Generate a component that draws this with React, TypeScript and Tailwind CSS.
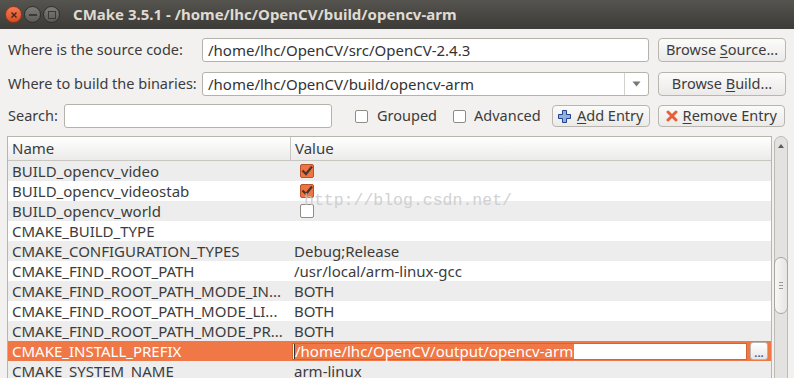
import React from 'react';

const font = { fontFamily: '"Noto Sans", "Open Sans", sans-serif' };

type Row = { name: string; value?: string; check?: boolean | null; selected?: boolean };

const rows: Row[] = [
  { name: 'BUILD_opencv_video', check: true },
  { name: 'BUILD_opencv_videostab', check: true },
  { name: 'BUILD_opencv_world', check: false },
  { name: 'CMAKE_BUILD_TYPE', value: '' },
  { name: 'CMAKE_CONFIGURATION_TYPES', value: 'Debug;Release' },
  { name: 'CMAKE_FIND_ROOT_PATH', value: '/usr/local/arm-linux-gcc' },
  { name: 'CMAKE_FIND_ROOT_PATH_MODE_IN...', value: 'BOTH' },
  { name: 'CMAKE_FIND_ROOT_PATH_MODE_LI...', value: 'BOTH' },
  { name: 'CMAKE_FIND_ROOT_PATH_MODE_PR...', value: 'BOTH' },
  { name: 'CMAKE_INSTALL_PREFIX', selected: true },
  { name: 'CMAKE_SYSTEM_NAME', value: 'arm-linux' },
];

function Check({ on }: { on: boolean }) {
  if (!on)
    return <div className="w-[14px] h-[14px] rounded-[2px] border border-[#8f8c86] bg-white" />;
  return (
    <div className="w-[14px] h-[14px] rounded-[2px] border border-[#b8542b] bg-[#ef7443] flex items-center justify-center">
      <svg width="12" height="12" viewBox="0 0 12 12">
        <path d="M1.5 5.5 L5 9 L11 1.5" fill="none" stroke="#4b3530" strokeWidth="2.2" />
      </svg>
    </div>
  );
}

function Btn({ children, className }: { children: React.ReactNode; className: string }) {
  return (
    <div
      className={`flex items-center justify-center whitespace-nowrap rounded-[4px] border border-[#b9b6b0] bg-gradient-to-b from-[#fbfbfa] to-[#ebeae8] text-[14.5px] text-[#3c3c3c] ${className}`}
    >
      {children}
    </div>
  );
}

export default function App() {
  return (
    <div className="w-[794px] h-[378px] overflow-hidden bg-[#f2f1f0] flex flex-col" style={font}>
      {/* title bar */}
      <div className="h-[29px] shrink-0 flex items-center bg-gradient-to-b from-[#55544f] to-[#3c3b37]">
        <div className="flex items-center gap-[2px] pl-[5px]">
          <div className="w-[17px] h-[17px] rounded-full bg-gradient-to-b from-[#f47a52] to-[#dd4a1c] border border-[#8c3a1d] flex items-center justify-center">
            <svg width="8" height="8" viewBox="0 0 8 8">
              <path d="M1.5 1.5 L6.5 6.5 M6.5 1.5 L1.5 6.5" stroke="#3c2a22" strokeWidth="1.4" />
            </svg>
          </div>
          <div className="w-[17px] h-[17px] rounded-full bg-gradient-to-b from-[#7d7c77] to-[#5c5b57] border border-[#2f2e2b] flex items-center justify-center">
            <div className="w-[8px] h-[2px] bg-[#3b3a36]" />
          </div>
          <div className="w-[17px] h-[17px] rounded-full bg-gradient-to-b from-[#7d7c77] to-[#5c5b57] border border-[#2f2e2b] flex items-center justify-center">
            <div className="w-[8px] h-[8px] border-[1.5px] border-[#3b3a36]" />
          </div>
        </div>
        <div className="ml-[13px] text-[15px] font-bold text-[#dfdbd2] leading-none whitespace-nowrap">
          CMake 3.5.1 - /home/lhc/OpenCV/build/opencv-arm
        </div>
      </div>

      <div className="flex flex-col pt-[9px] text-[14.5px] text-[#3c3c3c] whitespace-nowrap">
        {/* source */}
        <div className="flex items-center h-[24px] pl-[8px]">
          <div className="w-[194px]">Where is the source code:</div>
          <div className="w-[447px] h-[24px] rounded-[3px] border border-[#b5b2ac] bg-white flex items-center px-[5px] text-[15px] text-[#333]">
            /home/lhc/OpenCV/src/OpenCV-2.4.3
          </div>
          <Btn className="ml-[9px] w-[128px] h-[24px]">
            Browse&nbsp;<span className="underline underline-offset-2">S</span>ource...
          </Btn>
        </div>
        {/* build */}
        <div className="flex items-center h-[24px] pl-[8px] mt-[10px]">
          <div className="w-[194px]">Where to build the binaries:</div>
          <div className="w-[447px] h-[24px] rounded-[3px] border border-[#b5b2ac] bg-white flex items-center text-[15px] text-[#333]">
            <div className="flex-1 px-[5px]">/home/lhc/OpenCV/build/opencv-arm</div>
            <div className="w-[24px] h-full border-l border-[#d4d2cd] flex items-center justify-center">
              <svg width="9" height="6" viewBox="0 0 9 6">
                <path d="M0.5 0.5 L8.5 0.5 L4.5 5.5 Z" fill="#7a7873" />
              </svg>
            </div>
          </div>
          <Btn className="ml-[9px] w-[128px] h-[24px]">
            Browse&nbsp;<span className="underline underline-offset-2">B</span>uild...
          </Btn>
        </div>
        {/* search */}
        <div className="flex items-center h-[24px] pl-[8px] mt-[8px]">
          <div className="w-[56px]">Search:</div>
          <div className="w-[268px] h-[24px] rounded-[3px] border border-[#b5b2ac] bg-white" />
          <div className="ml-[23px] w-[13px] h-[13px] rounded-[2px] border border-[#8f8c86] bg-white" />
          <div className="ml-[9px]">Grouped</div>
          <div className="ml-[16px] w-[13px] h-[13px] rounded-[2px] border border-[#8f8c86] bg-white" />
          <div className="ml-[8px]">Advanced</div>
          <Btn className="ml-[11px] w-[98px] h-[22px] gap-[6px]">
            <svg width="13" height="13" viewBox="0 0 13 13">
              <path d="M4.5 0.5 H8.5 V4.5 H12.5 V8.5 H8.5 V12.5 H4.5 V8.5 H0.5 V4.5 H4.5 Z" fill="#8fb0e0" stroke="#23408a" strokeWidth="1" />
            </svg>
            <span>
              <span className="underline underline-offset-2">A</span>dd Entry
            </span>
          </Btn>
          <Btn className="ml-[8px] w-[127px] h-[22px] gap-[5px]">
            <svg width="12" height="12" viewBox="0 0 12 12">
              <path d="M2 2 L10 10 M10 2 L2 10" stroke="#e8603a" strokeWidth="3" strokeLinecap="round" />
            </svg>
            <span>
              <span className="underline underline-offset-2">R</span>emove Entry
            </span>
          </Btn>
        </div>

        {/* table */}
        <div className="flex mt-[8px] pl-[7px]">
          <div className="relative w-[765px] h-[250px] border border-[#b8b5af] bg-white overflow-hidden">
            <div className="flex h-[24px] border-b border-[#c8c6c1] bg-gradient-to-b from-[#ffffff] to-[#ecebea] text-[15px] text-[#3c3c3c]">
              <div className="w-[283px] border-r border-[#c8c6c1] flex items-center pl-[4px]">Name</div>
              <div className="flex-1 flex items-center pl-[4px]">Value</div>
            </div>
            {rows.map((r, i) => (
              <div
                key={r.name}
                className={`flex h-[20px] items-center text-[15px] ${
                  r.selected ? 'bg-[#f07746] text-white' : i % 2 === 0 ? 'bg-[#ededed] text-[#3c3c3c]' : 'bg-white text-[#3c3c3c]'
                }`}
              >
                <div className="w-[284px] pl-[4px] whitespace-nowrap overflow-hidden">{r.name}</div>
                {r.selected ? (
                  <div className="flex-1 flex items-center h-full">
                    <div className="w-[455px] h-[17px] bg-white border border-[#d5642f] flex items-center pl-[1px]">
                      <div className="w-[1px] h-[15px] bg-[#333]" />
                      <div className="bg-[#f07746] text-white h-[15px] leading-[15px] pr-[1px]">/home/lhc/OpenCV/output/opencv-arm</div>
                    </div>
                    <div className="ml-[3px] w-[18px] h-[18px] rounded-[3px] border border-[#b9b6b0] bg-gradient-to-b from-[#ffffff] to-[#e8e7e5] flex items-end justify-center text-[11px] leading-[12px] text-[#3a5a9a] font-bold">
                      ...
                    </div>
                  </div>
                ) : (
                  <div className="flex-1 pl-[2px] flex items-center">
                    {r.check === undefined || r.check === null ? r.value : <div className="ml-[6px]"><Check on={r.check} /></div>}
                  </div>
                )}
              </div>
            ))}
            <div
              className="absolute left-[296px] top-[52px] text-[16.5px] text-[#c8c8c8] opacity-80"
              style={{ fontFamily: '"Liberation Mono", monospace' }}
            >
              http://blog.csdn.net/
            </div>
          </div>
          {/* scrollbar */}
          <div className="ml-[2px] w-[14px] h-[250px] rounded-t-[7px] border border-[#bdbab4] bg-[#e3e2e0] flex flex-col">
            <div className="h-[18px] flex items-center justify-center">
              <svg width="6" height="4" viewBox="0 0 6 4">
                <path d="M0 4 L3 0 L6 4 Z" fill="#5d5b57" />
              </svg>
            </div>
            <div className="mt-[102px] h-[57px] mx-[-1px] rounded-[7px] border border-[#a9a6a0] bg-gradient-to-r from-[#f7f7f6] to-[#e6e5e3] flex flex-col items-center justify-center gap-[2px]">
              <div className="w-[4px] h-[1px] bg-[#9a9892]" />
              <div className="w-[4px] h-[1px] bg-[#9a9892]" />
              <div className="w-[4px] h-[1px] bg-[#9a9892]" />
            </div>
          </div>
        </div>
      </div>
    </div>
  );
}
